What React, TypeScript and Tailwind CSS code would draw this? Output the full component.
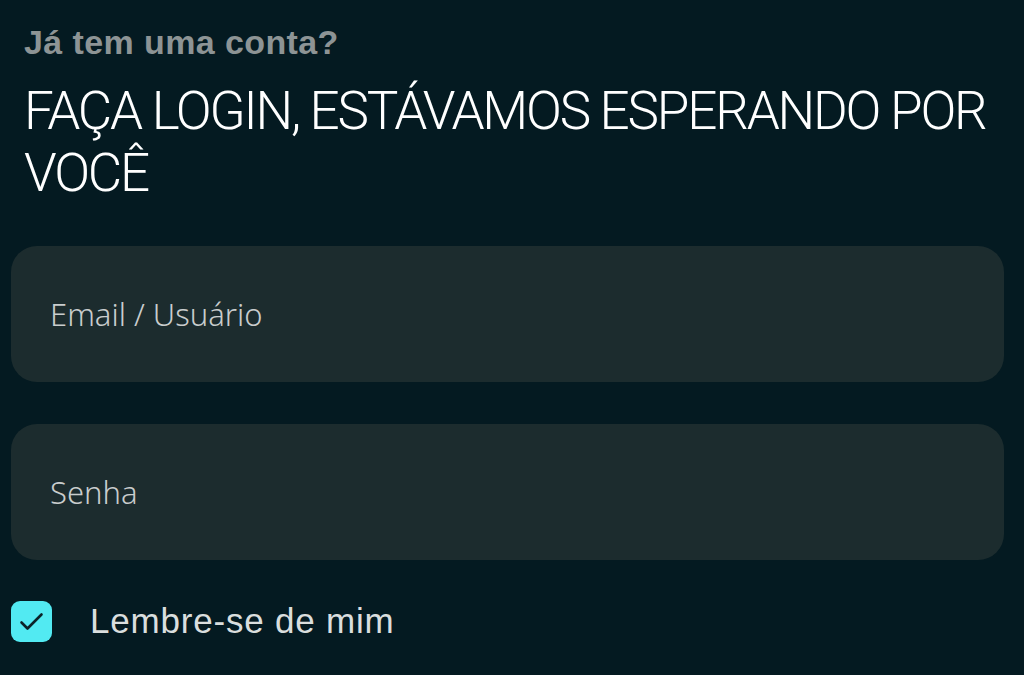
import React from "react";

export default function App() {
  return (
    <div className="w-[1024px] h-[675px] overflow-hidden bg-[#041a21] flex flex-col" style={{ fontFamily: "Roboto, 'Noto Sans', sans-serif" }}>
      <div className="px-[24px] pt-[22px]">
        <p className="text-[34px] leading-[40px] font-bold text-[#8d9495] tracking-[0.4px]" style={{ fontFamily: "'Liberation Sans', Arial, sans-serif" }}>Já tem uma conta?</p>
        <h1 className="mt-[18px] text-[53px] leading-[62px] font-light text-white tracking-[-2.2px]">
          FAÇA LOGIN, ESTÁVAMOS ESPERANDO POR VOCÊ
        </h1>
      </div>
      <div className="px-[11px] pr-[20px] mt-[42px] flex flex-col gap-[42px]">
        <div className="h-[136px] rounded-[26px] bg-[#1c2c2e] flex items-center pl-[39px]">
          <span className="text-[31px] font-light text-[#c9cdcd]" style={{ fontFamily: "'Noto Sans', sans-serif" }}>Email / Usuário</span>
        </div>
        <div className="h-[136px] rounded-[26px] bg-[#1c2c2e] flex items-center pl-[39px]">
          <span className="text-[31px] font-light text-[#c9cdcd]" style={{ fontFamily: "'Noto Sans', sans-serif" }}>Senha</span>
        </div>
      </div>
      <div className="px-[11px] mt-[35px] flex items-center gap-[38px]">
        <div className="w-[41px] h-[41px] rounded-[9px] bg-[#52eaf2] flex items-center justify-center">
          <svg width="41" height="41" viewBox="0 0 41 41" fill="none" stroke="#0b2228" strokeWidth="2.6" strokeLinecap="round" strokeLinejoin="round">
            <path d="M10.5 21.5l6 6L30.5 13.5" />
          </svg>
        </div>
        <span className="text-[35px] text-[#dadede] tracking-[0.8px]" style={{ fontFamily: "'Liberation Sans', Arial, sans-serif" }}>Lembre-se de mim</span>
      </div>
    </div>
  );
}
